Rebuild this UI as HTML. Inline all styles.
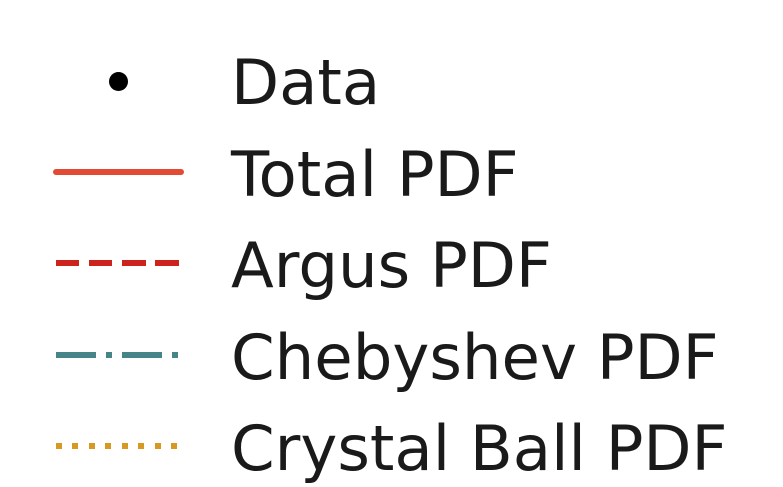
<!DOCTYPE html>
<html><head><meta charset="utf-8"><style>html,body{margin:0;padding:0;background:#fff;}svg{display:block}</style></head>
<body>
<svg width="783" height="487" viewBox="0 0 783 487" xmlns="http://www.w3.org/2000/svg">
<rect width="783" height="487" fill="#fff"/>
<circle cx="118.5" cy="81.5" r="9.5" fill="#000"/>
<line x1="56" y1="172" x2="181" y2="172" stroke="#e24a33" stroke-width="6" stroke-linecap="round"/>
<g fill="#cc241d">
<rect x="56" y="260" width="23" height="6"/><rect x="89" y="260" width="23" height="6"/><rect x="122" y="260" width="24" height="6"/><rect x="155" y="260" width="24" height="6"/>
</g>
<g fill="#458588">
<rect x="56" y="352" width="40" height="6"/><rect x="106" y="352" width="6" height="6"/><rect x="122" y="352" width="40" height="6"/><rect x="172" y="352" width="6" height="6"/>
</g>
<g fill="#d79921">
<rect x="56" y="443" width="6" height="6"/><rect x="72" y="443" width="6" height="6"/><rect x="89" y="443" width="6" height="6"/><rect x="105" y="443" width="6" height="6"/><rect x="122" y="443" width="6" height="6"/><rect x="138" y="443" width="6" height="6"/><rect x="155" y="443" width="6" height="6"/><rect x="171" y="443" width="6" height="6"/>
</g>
<g font-family="DejaVu Sans, sans-serif" font-size="62.5" fill="#1a1a1a">
<text x="231" y="104">Data</text>
<text x="231" y="196">Total PDF</text>
<text x="231" y="287">Argus PDF</text>
<text x="231" y="379">Chebyshev PDF</text>
<text x="231" y="470">Crystal Ball PDF</text>
</g>
</svg>
</body></html>
